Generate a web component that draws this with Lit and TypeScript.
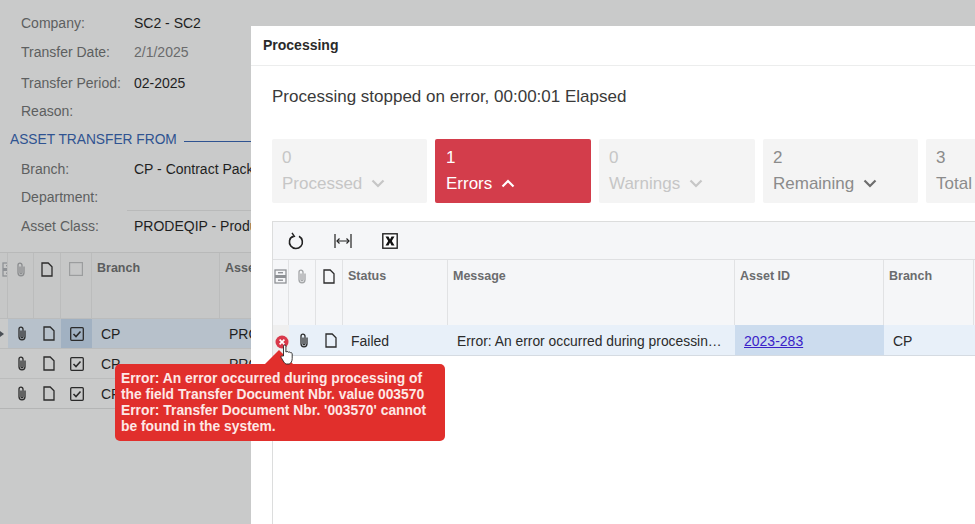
import { LitElement, html, css, svg } from "lit";
import { customElement } from "lit/decorators.js";

const clip = (c: string) => html`<svg class="ic" width="12" height="15" viewBox="0 0 12 15" fill="none" stroke="${c}" stroke-width="1.3"><path d="M5 4.4v6.4a1 1 0 0 0 2 0V3.2a2 2 0 0 0-4 0v7.6a3 3 0 0 0 6 0V4.4"/></svg>`;
const doc = (c: string) => html`<svg class="ic" width="12" height="15" viewBox="0 0 12 15" fill="none" stroke="${c}" stroke-width="1.3"><path d="M1 1h6.2L11 4.8V14H1z"/></svg>`;
const chk = html`<svg class="ic" width="14" height="14" viewBox="0 0 14 14" fill="none"><rect x=".7" y=".7" width="12.6" height="12.6" rx="1" stroke="#2b2b2b" stroke-width="1.3"/><path d="M3.5 7l2.5 2.5 4.5-5" stroke="#2b2b2b" stroke-width="1.6"/></svg>`;
const chev = (c: string, up = false) => html`<svg class="chev" width="14" height="9" viewBox="0 0 14 9" fill="none" stroke="${c}" stroke-width="2.2"><path d="${up ? "M1.5 7.5 7 2l5.5 5.5" : "M1.5 1.5 7 7l5.5-5.5"}"/></svg>`;
const sel = svg`<rect x="1" y="1" width="11" height="13" fill="none" stroke="#8f9296" stroke-width="1.3"/><rect x="1" y="6" width="11" height="3" fill="#8f9296"/><rect x="4" y="3" width="5" height="1.4" fill="#8f9296"/><rect x="4" y="10.5" width="5" height="1.4" fill="#8f9296"/>`;

@customElement("app-root")
export class AppRoot extends LitElement {
  static styles = css`
    :host { display: block; width: 975px; height: 524px; position: relative; overflow: hidden; background: #c9caca; font-family: "Liberation Sans", Arial, sans-serif; color: #1f1f1f; }
    .ic { display: block; }
    .form { padding-top: 9px; display: flex; flex-direction: column; width: 251px; overflow: hidden; }
    .row { display: grid; grid-template-columns: 106px 1fr; margin-left: 21px; height: 29px; font-size: 14px; line-height: 28px; white-space: nowrap; overflow: hidden; }
    .row.first { height: 27px; }
    .row.dim { line-height: 32px; }
    .row.period { height: 31px; line-height: 36px; }
    .row.tall { line-height: 30px; }
    .row.r3 { height: 28px; }
    .lab { color: #5d5f60; }
    .val { padding-left: 7px; border-bottom: 1px solid #b9baba; overflow: hidden; height: 100%; box-sizing: border-box; }
    .row .short { width: 105px; }
    .row.dim .v { color: #6a6b6c; }
    .sec { display: flex; align-items: center; margin-left: 10px; height: 29px; padding-bottom: 1px; box-sizing: border-box; font-size: 13.75px; color: #2f5391; white-space: nowrap; }
    .sec i { flex: 1; height: 1px; background: #2f5391; margin: 4px 0 0 7px; }
    .bg-grid { position: absolute; left: 0; right: 0; top: 252px; }
    .bg-h, .bg-r { display: grid; grid-template-columns: 8px 26px 27px 31px 128px 60px; }
    .bg-h { border-top: 1px solid #b8b9b9; background: #c6c7c7; box-sizing: border-box; height: 66px; font-size: 12.5px; font-weight: 700; color: #5b5d5e; }
    .bg-h > div { border-right: 1px solid #bbbcbc; padding: 8px 0 0 5px; box-sizing: border-box; overflow: hidden; white-space: nowrap; }
    .bg-h > div.ctr, .bg-r > div.ctr { padding: 0; display: flex; justify-content: center; }
    .bg-h > div.ctr { padding-top: 9px; }
    .bg-r { height: 30px; border-top: 1px solid #bbbcbc; font-size: 14px; line-height: 30px; box-sizing: border-box; }
    .bg-r > div { padding-left: 9px; overflow: hidden; white-space: nowrap; }
    .bg-r > div.ctr { align-items: center; }
    .bg-r > div.ctr.s { padding-left: 2px; }
    .bg-r.on { background: #b7c1cb; }
    .bg-r.on .c { background: #a1b1c2; }
    .bg-r > .pre { background: #c9caca; padding: 0; display: flex; align-items: center; }
    .bg-end { border-top: 1px solid #b4b5b5; }
    .modal { position: absolute; left: 251px; top: 26px; width: 724px; height: 498px; background: #fff; box-sizing: border-box; overflow: hidden; }
    .title { height: 40px; box-sizing: border-box; border-bottom: 1px solid #eceded; padding-left: 12px; font-size: 14px; font-weight: 700; line-height: 39px; color: #2a2a2a; }
    .msg { margin: 20px 0 0 21px; font-size: 17px; line-height: 22px; color: #3a3a3a; white-space: nowrap; }
    .cards { display: flex; gap: 8px; margin: 31px 0 0 21px; }
    .card { flex: 0 0 155px; height: 64px; box-sizing: border-box; background: #f4f4f4; border-radius: 2px; padding: 6px 10px; color: #c6c6c6; font-size: 17px; line-height: 25px; white-space: nowrap; }
    .card .l { display: flex; align-items: center; gap: 9px; margin-top: 1px; }
    .card.wide { flex-basis: 156px; }
    .card.dark { color: #8b8b8b; }
    .card.err { background: #d33d4b; color: #fff; padding-left: 11px; }
    .panel { margin: 18px 0 0 21px; width: 720px; height: 320px; border-left: 1px solid #dcdddd; border-top: 1px solid #dcdddd; box-sizing: border-box; }
    .tb { height: 38px; box-sizing: border-box; background: #f5f6f8; border-bottom: 1px solid #dfe0e2; display: flex; align-items: center; padding-left: 15px; gap: 30px; }
    .g-h, .g-r { display: grid; grid-template-columns: 16px 27px 27px 105px 287px 149px 90px; }
    .g-h { height: 65px; box-sizing: border-box; background: #f5f6f8; font-size: 12.5px; font-weight: 700; color: #6b6c6e; }
    .g-h > div { border-right: 1px solid #e1e2e4; padding: 9px 0 0 5px; box-sizing: border-box; white-space: nowrap; }
    .g-h > div.ctr { padding: 9px 0 0; display: flex; justify-content: center; }
    .g-r { height: 31px; box-sizing: border-box; background: #e8f0f9; border-bottom: 1px solid #d5dbe2; font-size: 14px; line-height: 32px; color: #2b2b2b; }
    .g-r > div { padding-left: 8px; white-space: nowrap; overflow: hidden; }
    .g-r > div.ctr { padding: 0 0 0 2px; display: flex; justify-content: center; align-items: center; }
    .g-r > .first { background: #efefef; padding: 0; }
    .g-r > .msgc { padding-left: 9px; font-size: 13.85px; }
    .g-r .act { background: #ccdcee; padding-left: 9px; }
    .g-r .b { padding-left: 9px; }
    .g-r a { color: #3a22c8; text-decoration: underline; }
    .elide { text-overflow: ellipsis; }
    .tip { position: absolute; left: 115px; top: 364px; width: 330px; height: 77px; box-sizing: border-box; background: #e12f2c; border-radius: 5px; padding: 6px; color: #fde8e6; font-size: 13.85px; font-weight: 700; line-height: 16px; white-space: nowrap; }
    .tip::before { content: ""; position: absolute; left: 150px; top: -14px; width: 0; height: 0; border-left: 14px solid transparent; border-right: 14px solid transparent; border-bottom: 14px solid #e12f2c; }
    .xdot { position: absolute; left: 275px; top: 335px; }
    .hand { position: absolute; left: 280px; top: 344px; }
  `;

  render() {
    const icon = (c: string, s = "") => html`<div class="ctr ${s}">${clip(c)}</div>`;
    const d = (c: string, s = "") => html`<div class="ctr ${s}">${doc(c)}</div>`;
    return html`
      <div class="form">
        <div class="row first"><span class="lab">Company:</span><span class="val v">SC2 - SC2</span></div>
        <div class="row dim"><span class="lab">Transfer Date:</span><span class="val short v">2/1/2025</span></div>
        <div class="row period"><span class="lab">Transfer Period:</span><span class="val short">02-2025</span></div>
        <div class="row tall"><span class="lab">Reason:</span><span class="val"></span></div>
        <div class="sec">ASSET TRANSFER FROM<i></i></div>
        <div class="row tall"><span class="lab">Branch:</span><span class="val">CP - Contract Packaging</span></div>
        <div class="row r3"><span class="lab">Department:</span><span class="val"></span></div>
        <div class="row tall"><span class="lab">Asset Class:</span><span class="val">PRODEQIP - Production</span></div>
      </div>

      <div class="bg-grid">
        <div class="bg-h">
          <div class="ctr" style="justify-content:flex-end"><svg width="13" height="15" viewBox="0 0 13 15" style="margin-right:-8px;flex:none">${sel}</svg></div>
          ${icon("#8a8c8e")}${d("#2b2b2b")}
          <div class="ctr"><svg width="14" height="14" viewBox="0 0 14 14"><rect x=".6" y=".6" width="12.8" height="12.8" fill="none" stroke="#9b9d9e" stroke-width="1.2"/></svg></div>
          <div>Branch</div><div>Asset</div>
        </div>
        ${["on", "", ""].map((k, i) => html`
          <div class="bg-r ${k}">
            <div class="pre">${i === 0 ? html`<svg width="4" height="6" viewBox="0 0 4 6"><path d="M0 0l4 3-4 3z" fill="#4a4f55"/></svg>` : ""}</div>
            ${icon("#2b2b2b", "s")}${d("#2b2b2b", "s")}
            <div class="ctr c">${chk}</div>
            <div>CP</div><div>PROD</div>
          </div>`)}
        <div class="bg-end"></div>
      </div>

      <div class="modal">
        <div class="title">Processing</div>
        <div class="msg">Processing stopped on error, 00:00:01 Elapsed</div>
        <div class="cards">
          <div class="card"><div>0</div><div class="l">Processed ${chev("#c6c6c6")}</div></div>
          <div class="card err wide"><div>1</div><div class="l">Errors ${chev("#fff", true)}</div></div>
          <div class="card wide"><div>0</div><div class="l">Warnings ${chev("#c6c6c6")}</div></div>
          <div class="card dark"><div>2</div><div class="l">Remaining ${chev("#6d6d6d")}</div></div>
          <div class="card dark"><div>3</div><div class="l">Total</div></div>
        </div>
        <div class="panel">
          <div class="tb">
            <svg width="16" height="18" viewBox="0 0 16 18" fill="none" stroke="#222" stroke-width="1.6"><path d="M5 4.2a6.5 6.5 0 1 0 6 .1"/><path d="M4 .8 6.4 4.4 2.6 5.6" stroke-width="1.4"/></svg>
            <svg width="18" height="16" viewBox="0 0 18 16" fill="none" stroke="#222" stroke-width="1.2"><path d="M1 1v14M17 1v14M3 8h12"/><path d="M5.5 5.5 3 8l2.5 2.5M12.5 5.5 15 8l-2.5 2.5"/></svg>
            <svg width="16" height="16" viewBox="0 0 16 16"><rect x=".8" y=".8" width="14.4" height="14.4" fill="#fff" stroke="#222" stroke-width="1.4"/><path d="M3.5 3.5h3l1.5 3 1.5-3h3L9.8 8l2.7 4.5h-3L8 9.5l-1.5 3h-3L6.2 8z" fill="#111"/></svg>
          </div>
          <div class="g-h">
            <div class="ctr"><svg width="13" height="15" viewBox="0 0 13 15">${sel}</svg></div>
            ${icon("#a2a4a6")}${d("#2b2b2b")}
            <div>Status</div><div>Message</div><div>Asset ID</div><div>Branch</div>
          </div>
          <div class="g-r">
            <div class="first"></div>
            ${icon("#2b2b2b")}${d("#2b2b2b")}
            <div>Failed</div>
            <div class="elide msgc">Error: An error occurred during processin…</div>
            <div class="act"><a>2023-283</a></div>
            <div class="b">CP</div>
          </div>
        </div>
      </div>

      <div class="tip">Error: An error occurred during processing of<br />the field Transfer Document Nbr. value 003570<br />Error: Transfer Document Nbr. '003570' cannot<br />be found in the system.</div>
      <svg class="xdot" width="14" height="14" viewBox="0 0 14 14"><circle cx="7" cy="7" r="6.5" fill="#d9394a"/><path d="M4.6 4.6l4.8 4.8M9.4 4.6l-4.8 4.8" stroke="#fff" stroke-width="1.6"/></svg>
      <svg class="hand" width="14" height="21" viewBox="0 0 14 21"><path d="M3.5 12V2.2a1.2 1.2 0 0 1 2.4 0V8l1-.4c.8-.2 1.4.1 1.6.6.8-.4 1.5-.2 1.8.5.9-.3 1.9.2 1.9 1.2v4.6c0 2.6-1.2 4.9-3 5.5H6.5C4.6 20 3 16.5 1.2 13.6c-.7-1.2.6-2.4 1.6-1.5z" fill="#fff" stroke="#222" stroke-width=".9"/></svg>
    `;
  }
}
